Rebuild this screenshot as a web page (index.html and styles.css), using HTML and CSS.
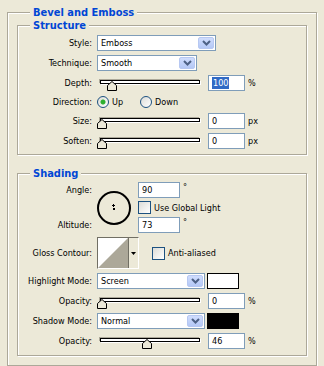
FILE: index.html
```html
<!DOCTYPE html>
<html>
<head>
<link rel="stylesheet" href="styles.css">
</head>
<body>

<div class="group outer">
  <div class="legend">Bevel and Emboss</div>

  <div class="group">
    <div class="legend">Structure</div>
    <div class="rows">
      <div class="row">
        <span class="lbl">Style:</span>
        <div class="combo style-combo"><span>Emboss</span><i class="btn"><svg width="9" height="6"><polyline points="1,1 4.5,4.5 8,1" fill="none" stroke="#4d6185" stroke-width="2"/></svg></i></div>
      </div>
      <div class="row">
        <span class="lbl">Technique:</span>
        <div class="combo tech-combo"><span>Smooth</span><i class="btn"><svg width="9" height="6"><polyline points="1,1 4.5,4.5 8,1" fill="none" stroke="#4d6185" stroke-width="2"/></svg></i></div>
      </div>
      <div class="row">
        <span class="lbl">Depth:</span>
        <div class="slider"><div class="track"></div><svg class="thumb" style="left: 10px" width="10" height="10"><polygon points="0.5,9.5 0.5,4.5 5,0.5 9.5,4.5 9.5,9.5" fill="#ece9d8" stroke="#000"/></svg></div>
        <div class="field"><span class="sel">100</span></div>
        <span class="unit">%</span>
      </div>
      <div class="row short">
        <span class="lbl">Direction:</span>
        <i class="radio on"></i><span class="opt">Up</span>
        <i class="radio"></i><span class="opt">Down</span>
      </div>
      <div class="row">
        <span class="lbl">Size:</span>
        <div class="slider"><div class="track"></div><svg class="thumb" style="left: 0px" width="10" height="10"><polygon points="0.5,9.5 0.5,4.5 5,0.5 9.5,4.5 9.5,9.5" fill="#ece9d8" stroke="#000"/></svg></div>
        <div class="field">0</div>
        <span class="unit">px</span>
      </div>
      <div class="row">
        <span class="lbl">Soften:</span>
        <div class="slider"><div class="track"></div><svg class="thumb" style="left: 0px" width="10" height="10"><polygon points="0.5,9.5 0.5,4.5 5,0.5 9.5,4.5 9.5,9.5" fill="#ece9d8" stroke="#000"/></svg></div>
        <div class="field">0</div>
        <span class="unit">px</span>
      </div>
    </div>
  </div>

  <div class="group shading">
    <div class="legend">Shading</div>
    <div class="rows">
      <div class="angle-block">
        <div class="lbl-col">
          <span class="lbl">Angle:</span>
          <span class="lbl">Altitude:</span>
        </div>
        <svg class="dial" width="34" height="34">
          <circle cx="17" cy="17" r="16" fill="none" stroke="#000" stroke-width="2"/>
          <rect x="16" y="13" width="1" height="3" fill="#000"/>
          <rect x="15" y="14" width="3" height="1" fill="#000"/>
          <rect x="16" y="17" width="2" height="2" fill="#000"/>
        </svg>
        <div class="angle-col">
          <div class="line"><div class="field wide">90</div><span class="deg">°</span></div>
          <div class="line"><i class="check"></i><span class="opt">Use Global Light</span></div>
          <div class="line"><div class="field wide">73</div><span class="deg">°</span></div>
        </div>
      </div>
      <div class="row gloss-row">
        <span class="lbl">Gloss Contour:</span>
        <div class="contour">
          <svg class="curve" width="30" height="30"><polygon points="0,30 30,0 30,30" fill="#aca899"/></svg>
          <div class="contour-btn"><svg width="5" height="3"><polygon points="0,0 5,0 2.5,3" fill="#000"/></svg></div>
        </div>
        <i class="check aa"></i><span class="opt">Anti-aliased</span>
      </div>
      <div class="row">
        <span class="lbl">Highlight Mode:</span>
        <div class="combo mode-combo"><span>Screen</span><i class="btn"><svg width="9" height="6"><polyline points="1,1 4.5,4.5 8,1" fill="none" stroke="#4d6185" stroke-width="2"/></svg></i></div>
        <div class="swatch"></div>
      </div>
      <div class="row">
        <span class="lbl">Opacity:</span>
        <div class="slider"><div class="track"></div><svg class="thumb" style="left: 0px" width="10" height="10"><polygon points="0.5,9.5 0.5,4.5 5,0.5 9.5,4.5 9.5,9.5" fill="#ece9d8" stroke="#000"/></svg></div>
        <div class="field">0</div>
        <span class="unit">%</span>
      </div>
      <div class="row">
        <span class="lbl">Shadow Mode:</span>
        <div class="combo mode-combo"><span>Normal</span><i class="btn"><svg width="9" height="6"><polyline points="1,1 4.5,4.5 8,1" fill="none" stroke="#4d6185" stroke-width="2"/></svg></i></div>
        <div class="swatch dark"></div>
      </div>
      <div class="row">
        <span class="lbl">Opacity:</span>
        <div class="slider"><div class="track"></div><svg class="thumb" style="left: 45px" width="10" height="10"><polygon points="0.5,9.5 0.5,4.5 5,0.5 9.5,4.5 9.5,9.5" fill="#ece9d8" stroke="#000"/></svg></div>
        <div class="field">46</div>
        <span class="unit">%</span>
      </div>
    </div>
  </div>
</div>

</body>
</html>
```

FILE: styles.css
```css
body {
	margin: 0;
	background-color: #ece9d8;
	font-family: "DejaVu Sans Condensed", "DejaVu Sans", sans-serif;
	font-stretch: condensed;
	font-size: 9px;
	color: #000000;
}

.group {
	box-sizing: border-box;
	width: 290px;
	margin-top: 6px;
	border: 1px solid #aca899;
	box-shadow: inset 1px 1px #ffffff, 1px 1px #ffffff;
}

.outer {
	width: 310px;
	margin: 12px 0 0 7px;
	padding: 0 9px 9px 9px;
}

.shading {
	margin-top: 18px;
}

.legend {
	display: table;
	margin: -7px 0 0 12px;
	padding: 0 3px;
	line-height: 13px;
	font-size: 11px;
	font-weight: bold;
	color: #0046d5;
	background-color: #ece9d8;
}

.outer > .legend {
	margin-left: 13px;
}

.rows {
	display: flex;
	flex-direction: column;
	gap: 4px;
	padding: 3px 0 5px 0;
}

.shading .rows {
	padding: 2px 0 6px 0;
}

.row {
	display: flex;
	align-items: center;
	height: 16px;
}

.row.short {
	height: 14px;
}

.lbl {
	width: 74px;
	margin-right: 5px;
	text-align: right;
	line-height: 16px;
	flex-shrink: 0;
}

.combo {
	box-sizing: border-box;
	display: flex;
	align-items: center;
	height: 16px;
	padding: 0 1px 0 3px;
	border: 1px solid #7f9db9;
	background-color: #ffffff;
}

.style-combo { width: 119px; }
.tech-combo { width: 100px; }
.mode-combo { width: 108px; }

.combo .btn {
	display: flex;
	align-items: center;
	justify-content: center;
	box-sizing: border-box;
	width: 16px;
	height: 12px;
	margin-left: auto;
	border: 1px solid #b7c8f2;
	border-radius: 2px;
	background: linear-gradient(#d0ddfd, #b4c8f6);
}

.slider {
	position: relative;
	box-sizing: border-box;
	width: 104px;
	height: 16px;
	padding: 5px 0 0 3px;
	margin-right: 7px;
}

.track {
	box-sizing: border-box;
	width: 100px;
	height: 4px;
	border: 1px solid #000000;
	background-color: #ffffff;
	box-shadow: -1px -1px #aca899, 1px 1px #ffffff;
}

.thumb {
	position: absolute;
	top: 6px;
}

.field {
	box-sizing: border-box;
	width: 37px;
	height: 16px;
	padding-left: 3px;
	border: 1px solid #7f9db9;
	background-color: #ffffff;
	line-height: 14px;
}

.field.wide {
	width: 42px;
}

.sel {
	display: inline-block;
	padding: 0 1px;
	line-height: 12px;
	background-color: #316ac5;
	color: #ffffff;
}

.unit {
	margin-left: 3px;
}

.radio {
	box-sizing: border-box;
	width: 12px;
	height: 12px;
	border: 1px solid #1c5180;
	border-radius: 50%;
	background: linear-gradient(135deg, #dcdcd7, #ffffff);
}

.radio.on {
	background: radial-gradient(circle, #2eb02e 0, #2eb02e 2px, transparent 3px), linear-gradient(135deg, #dcdcd7, #ffffff);
}

.opt {
	margin: 0 17px 0 3px;
}

.check {
	box-sizing: border-box;
	width: 13px;
	height: 13px;
	border: 1px solid #1c5180;
	background: linear-gradient(135deg, #dcdcd7, #ffffff);
}

.angle-block {
	display: flex;
	align-items: center;
	height: 51px;
}

.lbl-col {
	display: flex;
	flex-direction: column;
	justify-content: space-between;
	height: 51px;
}

.dial {
	margin-right: 7px;
}

.angle-col {
	display: flex;
	flex-direction: column;
	gap: 3px;
}

.line {
	display: flex;
	align-items: center;
	min-height: 13px;
}

.deg {
	align-self: flex-start;
	margin-left: 3px;
	line-height: 10px;
}

.gloss-row {
	height: 32px;
}

.contour {
	box-sizing: border-box;
	display: flex;
	width: 42px;
	height: 32px;
	border: 1px solid #716f64;
	border-right-color: #ffffff;
	border-bottom-color: #ffffff;
	background-color: #ffffff;
}

.contour-btn {
	display: flex;
	align-items: center;
	justify-content: center;
	flex: 1;
	border-left: 1px solid #716f64;
	background-color: #ece9d8;
}

.check.aa {
	margin-left: 13px;
}

.swatch {
	box-sizing: border-box;
	width: 32px;
	height: 16px;
	margin-left: 2px;
	border: 1px solid #000000;
	background-color: #ffffff;
}

.swatch.dark {
	background-color: #000000;
}
```
